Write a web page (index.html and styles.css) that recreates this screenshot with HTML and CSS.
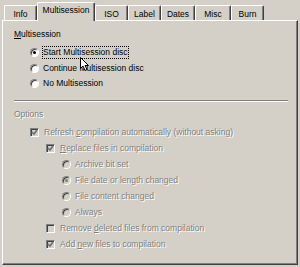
FILE: index.html
```html
<!DOCTYPE html>
<html lang="en">
<head>
    <meta charset="UTF-8">
    <title>Multisession</title>
    <link rel="stylesheet" href="styles.css">
</head>
<body>
    <div class="tabctl">
        <div class="tabstrip">
            <div class="tab tab-info">Info</div>
            <div class="tab tab-multi tab-active">Multisession</div>
            <div class="tab tab-iso">ISO</div>
            <div class="tab tab-label">Label</div>
            <div class="tab tab-dates">Dates</div>
            <div class="tab tab-misc">Misc</div>
            <div class="tab tab-burn">Burn</div>
        </div>

        <div class="panel">
            <div class="group-label"><u>M</u>ultisession</div>
            <div class="rows rows-multi">
                <div class="row lvl1">
                    <span class="radio on"></span>
                    <span class="text focus">Start Multisession disc</span>
                </div>
                <div class="row lvl1">
                    <span class="radio"></span>
                    <span class="text">Continue Multisession disc</span>
                </div>
                <div class="row lvl1">
                    <span class="radio"></span>
                    <span class="text">No Multisession</span>
                </div>
            </div>

            <div class="sep"></div>

            <div class="group-label disabled">Options</div>
            <div class="rows rows-opts disabled">
                <div class="row lvl1">
                    <span class="check on"><svg viewBox="0 0 7 7"><path d="M1 3 L3 5 L6 1"/></svg></span>
                    <span class="text">Refresh <u>c</u>ompilation automatically (without asking)</span>
                </div>
                <div class="row lvl2">
                    <span class="check on"><svg viewBox="0 0 7 7"><path d="M1 3 L3 5 L6 1"/></svg></span>
                    <span class="text"><u>R</u>eplace files in compilation</span>
                </div>
                <div class="row lvl3">
                    <span class="radio"></span>
                    <span class="text">Archive bit set</span>
                </div>
                <div class="row lvl3">
                    <span class="radio on"></span>
                    <span class="text">File date or length changed</span>
                </div>
                <div class="row lvl3">
                    <span class="radio"></span>
                    <span class="text">File content changed</span>
                </div>
                <div class="row lvl3">
                    <span class="radio"></span>
                    <span class="text">Always</span>
                </div>
                <div class="row lvl2">
                    <span class="check"></span>
                    <span class="text">Remove <u>d</u>eleted files from compilation</span>
                </div>
                <div class="row lvl2">
                    <span class="check on"><svg viewBox="0 0 7 7"><path d="M1 3 L3 5 L6 1"/></svg></span>
                    <span class="text">Add <u>n</u>ew files to compilation</span>
                </div>
            </div>

            <!-- mouse pointer sitting over the first option -->
            <svg class="cursor" width="10" height="15" viewBox="0 0 10 15">
                <path d="M0.5 0.5 L0.5 11.5 L3 9 L5 13.5 L7 12.5 L5 8.5 L8.5 8.5 Z" fill="#fff" stroke="#000" stroke-width="1" stroke-linejoin="miter"/>
            </svg>
        </div>
    </div>
</body>
</html>
```

FILE: styles.css
```css
* {
    margin: 0;
    padding: 0;
    box-sizing: border-box;
}

body {
    background: #d4d0c8;
    font-family: 'Liberation Sans', Arial, sans-serif;
    font-size: 8.5px;
    color: #000;
    width: 300px;
    height: 267px;
    overflow: hidden;
}

.tabctl {
    padding-left: 2px;
}

/* tab strip */
.tabstrip {
    display: flex;
    align-items: flex-end;
    height: 20px;
    padding-left: 2px;
}

.tab {
    height: 15px;
    display: flex;
    align-items: center;
    justify-content: center;
    padding-top: 1px;
    border-top: 1px solid #fff;
    border-left: 1px solid #fff;
    border-right: 1px solid #404040;
    border-radius: 2px 2px 0 0;
    box-shadow: inset -1px 0 0 #808080;
    background: #d4d0c8;
}

.tab-active {
    height: 19px;
    margin-bottom: -1px;
    padding-top: 0;
    padding-bottom: 4px;
    position: relative;
    z-index: 1;
}

.tab-info { width: 33px; }
.tab-multi { width: 58px; }
.tab-iso { width: 33px; }
.tab-label { width: 33px; }
.tab-dates { width: 34px; }
.tab-misc { width: 36px; }
.tab-burn { width: 33px; }

/* page */
.panel {
    position: relative;
    width: 296px;
    height: 245px;
    padding: 7px 9px 0 11px;
    border-top: 1px solid #fff;
    border-left: 1px solid #fff;
    border-right: 1px solid #404040;
    border-bottom: 1px solid #404040;
    box-shadow: inset -1px -1px 0 #808080;
}

.group-label {
    height: 12px;
    line-height: 12px;
}

.disabled {
    color: #808080;
    text-shadow: 1px 1px 0 #fff;
}

.rows-multi {
    margin-top: 5px;
}

.rows-multi .row {
    height: 15.5px;
}

.rows-opts {
    margin-top: 5px;
}

.rows-opts .row {
    height: 16px;
}

.row {
    display: flex;
    align-items: center;
}

.lvl1 { padding-left: 16px; }
.lvl2 { padding-left: 32px; }
.lvl3 { padding-left: 48px; }

.text {
    line-height: 11px;
    white-space: nowrap;
}

.focus {
    border: 1px dotted #000;
    margin-left: -1px;
}

.sep {
    height: 2px;
    margin-top: 8px;
    border-top: 1px solid #808080;
    border-bottom: 1px solid #fff;
}

.rows-multi + .sep + .group-label {
    margin-top: 6px;
}

/* radio buttons */
.radio {
    position: relative;
    flex: none;
    width: 9px;
    height: 9px;
    margin-right: 4px;
    border-radius: 50%;
    border: 1px solid;
    border-color: #808080 #fff #fff #808080;
    box-shadow: inset 1px 1px 0 #404040;
    background: #fff;
}

.radio.on:after {
    content: "";
    position: absolute;
    left: 2px;
    top: 2px;
    width: 3px;
    height: 3px;
    border-radius: 50%;
    background: #000;
}

.disabled .radio {
    background: #d4d0c8;
}

.disabled .radio.on:after {
    background: #808080;
}

/* check boxes */
.check {
    position: relative;
    flex: none;
    width: 9px;
    height: 9px;
    margin-right: 5px;
    border: 1px solid;
    border-color: #808080 #fff #fff #808080;
    box-shadow: inset 1px 1px 0 #404040;
    background: #d4d0c8;
}

.check svg {
    position: absolute;
    left: 0;
    top: 0;
    width: 7px;
    height: 7px;
}

.check path {
    fill: none;
    stroke: #707070;
    stroke-width: 1.6;
}

.cursor {
    position: absolute;
    left: 77px;
    top: 36px;
}
```
